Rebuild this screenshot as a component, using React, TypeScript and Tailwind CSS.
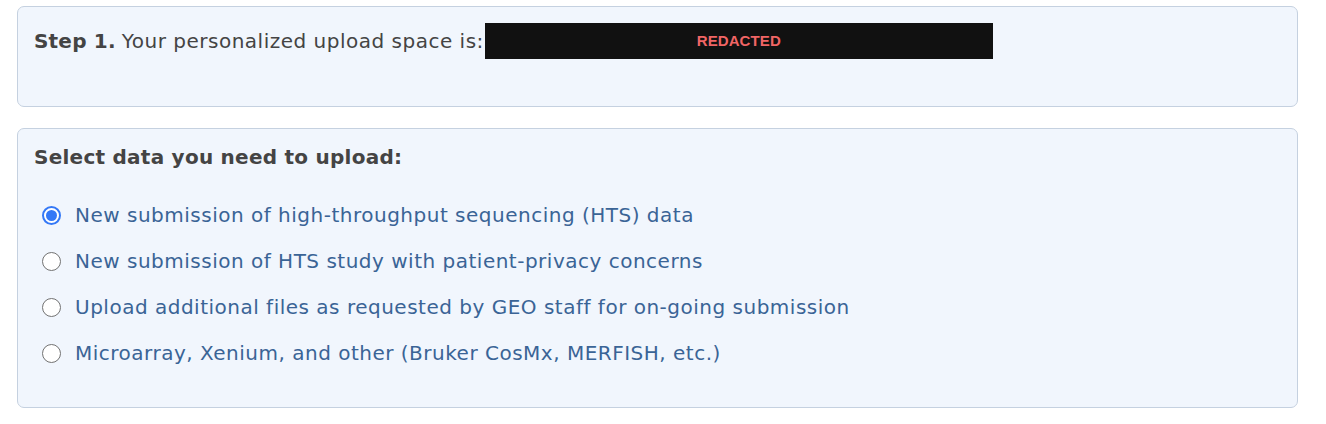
import React from "react";

const options = [
  "New submission of high-throughput sequencing (HTS) data",
  "New submission of HTS study with patient-privacy concerns",
  "Upload additional files as requested by GEO staff for on-going submission",
  "Microarray, Xenium, and other (Bruker CosMx, MERFISH, etc.)",
];

function Radio({ checked }: { checked: boolean }) {
  return checked ? (
    <span className="flex h-[19px] w-[19px] shrink-0 items-center justify-center rounded-full border-[2px] border-[#3478f6] bg-white">
      <span className="block h-[11px] w-[11px] rounded-full bg-[#3478f6]" />
    </span>
  ) : (
    <span className="block h-[19px] w-[19px] shrink-0 rounded-full border-[1.5px] border-[#727272] bg-white" />
  );
}

export default function App() {
  return (
    <div
      className="min-h-[424px] bg-white pl-[17px] pr-[28px] pt-[6px] text-[20px] leading-[30px] tracking-[0.5px]"
      style={{ fontFamily: '"DejaVu Sans", Verdana, sans-serif' }}
    >
      <div className="h-[101px] rounded-[7px] border border-[#c5d1e0] bg-[#f1f6fd] px-[16px] pt-[16px]">
        <div className="flex items-center text-[#444]">
          <span className="font-bold tracking-[0.2px]">Step 1.</span>
          <span className="ml-[6px]">Your personalized upload space is:</span>
          <span
            className="ml-[1px] flex h-[36px] w-[508px] items-center justify-center bg-[#111111] text-[15px] font-bold tracking-[0.1px] text-[#f06565]"
            style={{ fontFamily: '"Liberation Sans", Arial, sans-serif' }}
          >
            REDACTED
          </span>
        </div>
      </div>
      <div className="mt-[21px] h-[280px] rounded-[7px] border border-[#c5d1e0] bg-[#f1f6fd] px-[16px] pt-[13px]">
        <div className="font-bold tracking-[0.25px] text-[#444]">Select data you need to upload:</div>
        <div className="mt-[28px] flex flex-col gap-[16px]">
          {options.map((o, i) => (
            <label key={i} className="flex items-center text-[#3a6496]">
              <span className="ml-[8px] mr-[14px] block">
                <Radio checked={i === 0} />
              </span>
              <span>{o}</span>
            </label>
          ))}
        </div>
      </div>
    </div>
  );
}
